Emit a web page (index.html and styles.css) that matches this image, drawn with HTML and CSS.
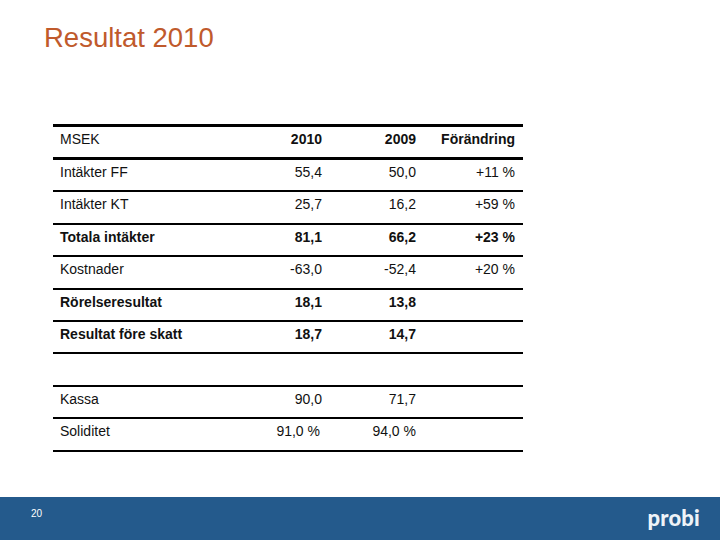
FILE: index.html
```html
<!DOCTYPE html>
<html lang="sv">
<head>
<meta charset="utf-8">
<title>Resultat 2010</title>
<link rel="stylesheet" href="styles.css">
</head>
<body>
<div class="slide">
  <h1 class="title">Resultat 2010</h1>
  <main class="content">
    <div class="table">
      <div class="row head">
        <div class="label">MSEK</div>
        <div class="num bold">2010</div>
        <div class="num bold">2009</div>
        <div class="num bold">Förändring</div>
      </div>
      <div class="row">
        <div class="label">Intäkter FF</div>
        <div class="num">55,4</div>
        <div class="num">50,0</div>
        <div class="num">+11 %</div>
      </div>
      <div class="row">
        <div class="label">Intäkter KT</div>
        <div class="num">25,7</div>
        <div class="num">16,2</div>
        <div class="num">+59 %</div>
      </div>
      <div class="row bold">
        <div class="label">Totala intäkter</div>
        <div class="num">81,1</div>
        <div class="num">66,2</div>
        <div class="num">+23 %</div>
      </div>
      <div class="row">
        <div class="label">Kostnader</div>
        <div class="num">-63,0</div>
        <div class="num">-52,4</div>
        <div class="num">+20 %</div>
      </div>
      <div class="row bold">
        <div class="label">Rörelseresultat</div>
        <div class="num">18,1</div>
        <div class="num">13,8</div>
        <div class="num"></div>
      </div>
      <div class="row bold">
        <div class="label">Resultat före skatt</div>
        <div class="num">18,7</div>
        <div class="num">14,7</div>
        <div class="num"></div>
      </div>
      <div class="row">
        <div class="label"></div>
        <div class="num"></div>
        <div class="num"></div>
        <div class="num"></div>
      </div>
      <div class="row">
        <div class="label">Kassa</div>
        <div class="num">90,0</div>
        <div class="num">71,7</div>
        <div class="num"></div>
      </div>
      <div class="row">
        <div class="label">Soliditet</div>
        <div class="num pct">91,0 %</div>
        <div class="num">94,0 %</div>
        <div class="num"></div>
      </div>
    </div>
  </main>
  <footer class="footer">
    <span class="page">20</span>
    <span class="logo">probi</span>
  </footer>
</div>
</body>
</html>
```

FILE: styles.css
```css
html, body {
  margin: 0;
  padding: 0;
  background: #ffffff;
}

.slide {
  width: 720px;
  height: 540px;
  display: flex;
  flex-direction: column;
  font-family: "Liberation Sans", Arial, sans-serif;
  color: #000;
}

.title {
  margin: 21px 0 0 44px;
  font-size: 27.5px;
  line-height: 33px;
  font-weight: normal;
  color: #c05a2c;
}

.content {
  flex: 1;
  padding: 70px 0 0 53px;
}

.table {
  width: 470px;
  border-top: 3px solid #000;
}

.row {
  display: grid;
  grid-template-columns: 169px 100px 94px 99px;
  padding-right: 8px;
  height: 32.4px;
  box-sizing: border-box;
  border-bottom: 2px solid #000;
  font-size: 14px;
  line-height: 16px;
  padding-top: 4px;
  color: #111;
}

.row.head {
  height: 33px;
  border-bottom-width: 3px;
  padding-top: 4px;
}

.label {
  padding-left: 7px;
}

.num {
  text-align: right;
}

.num.pct {
  padding-right: 2px;
}

.bold {
  font-weight: bold;
}

.footer {
  height: 43px;
  background: #245a8c;
  display: flex;
  align-items: flex-start;
  justify-content: space-between;
  padding: 0 20px 0 31px;
}

.page {
  margin-top: 11px;
  font-size: 10px;
  line-height: 12px;
  color: #ffffff;
}

.logo {
  margin-top: 8px;
  font-family: Lato, "Open Sans", sans-serif;
  font-weight: 900;
  font-size: 22px;
  line-height: 26px;
  color: #eef3f8;
  letter-spacing: 0.2px;
}
```
